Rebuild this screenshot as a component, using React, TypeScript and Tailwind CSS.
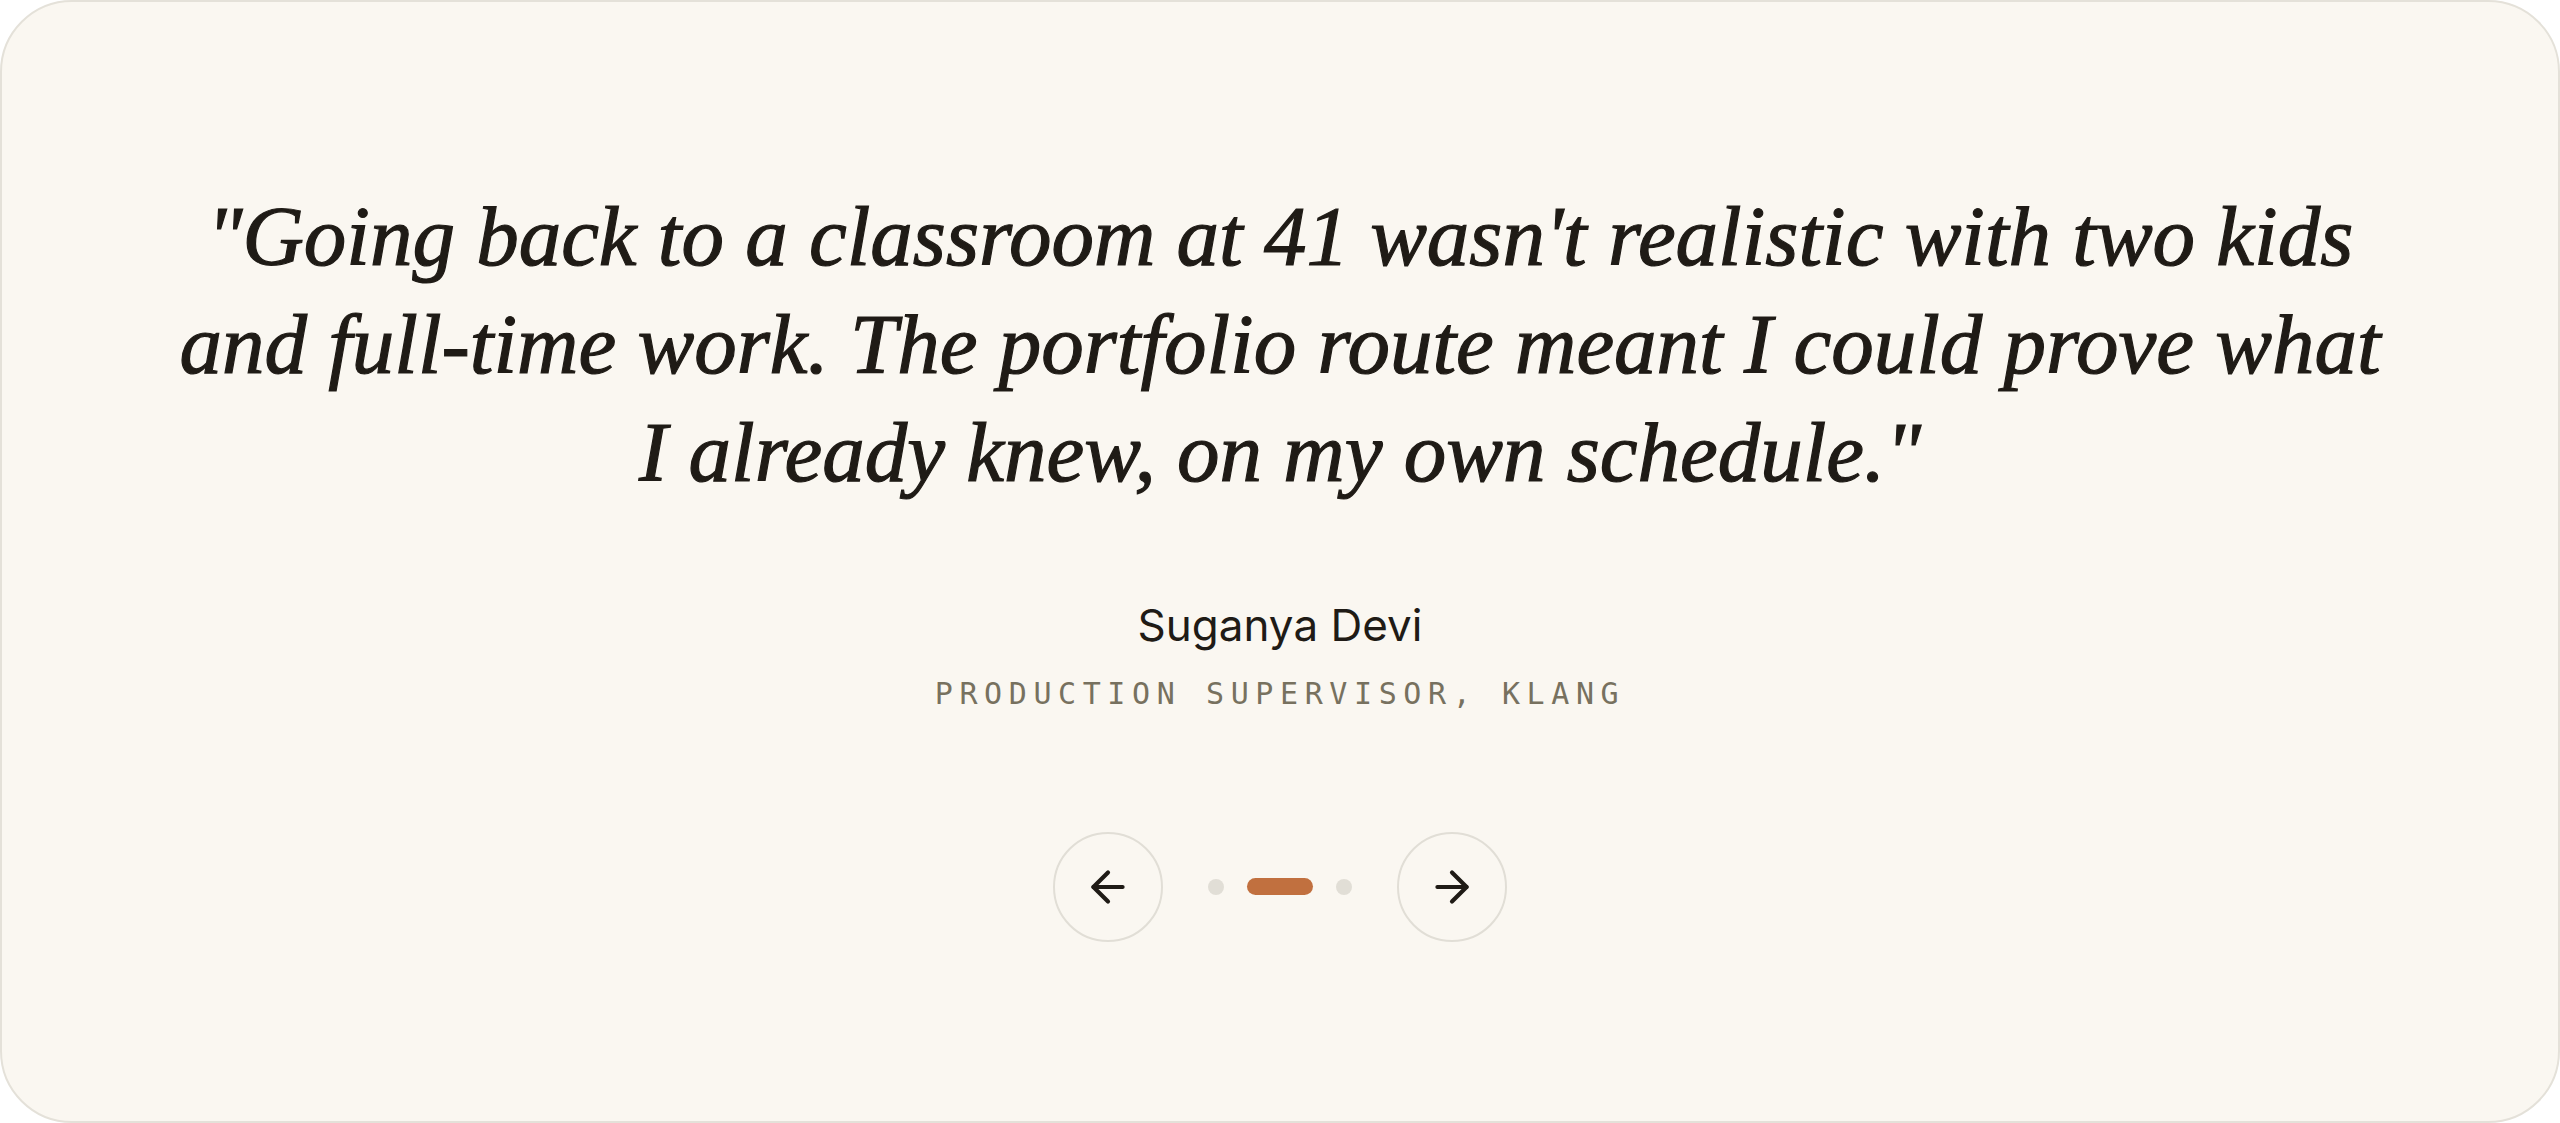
import { ArrowLeft, ArrowRight } from "lucide-react";

const quoteLines = [
  "\"Going back to a classroom at 41 wasn't realistic with two kids",
  "and full-time work. The portfolio route meant I could prove what",
  "I already knew, on my own schedule.\"",
];

export default function App() {
  return (
    <div className="w-[2560px] h-[1123px] bg-white">
      <section className="h-full rounded-[72px] border-2 border-[#e4e1d9] bg-[#faf7f1] flex flex-col items-center justify-center">
        <blockquote
          className="text-center text-[#1f1b16] text-[85px] leading-[108px] italic [-webkit-text-stroke:1.2px_#1f1b16]"
          style={{ fontFamily: '"Liberation Serif", "DejaVu Serif", serif' }}
        >
          {quoteLines.map((line, i) => (
            <span key={i} className="block whitespace-nowrap">{line}</span>
          ))}
        </blockquote>

        <div className="mt-[90px] flex flex-col items-center">
          <p className="text-[44px] leading-[58px] text-[#1f1b16]" style={{ fontFamily: "Inter, sans-serif" }}>
            Suganya Devi
          </p>
          <p
            className="mt-[20px] text-[30px] leading-[40px] tracking-[0.22em] uppercase text-[#77715f]"
            style={{ fontFamily: '"DejaVu Sans Mono", "Liberation Mono", monospace' }}
          >
            Production Supervisor, Klang
          </p>
        </div>

        <div className="mt-[118px] flex items-center gap-[45px]">
          <button className="w-[110px] h-[110px] rounded-full border-2 border-[#e1ded6] flex items-center justify-center text-[#1f1b16]">
            <ArrowLeft size={50} strokeWidth={2} />
          </button>
          <div className="flex items-center gap-[23px]">
            <span className="w-4 h-4 rounded-full bg-[#e1ded6]" />
            <span className="w-[66px] h-[17px] rounded-full bg-[#c1703f]" />
            <span className="w-4 h-4 rounded-full bg-[#e1ded6]" />
          </div>
          <button className="w-[110px] h-[110px] rounded-full border-2 border-[#e1ded6] flex items-center justify-center text-[#1f1b16]">
            <ArrowRight size={50} strokeWidth={2} />
          </button>
        </div>
      </section>
    </div>
  );
}
